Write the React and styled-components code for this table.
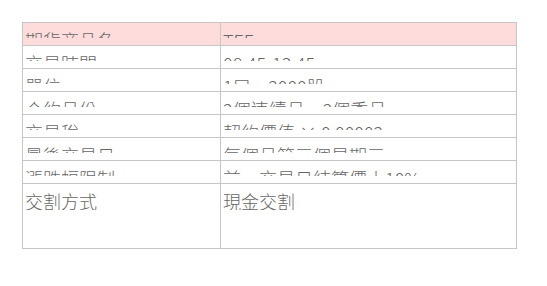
import React from 'react'
import styled, { createGlobalStyle } from 'styled-components'

const GlobalStyle = createGlobalStyle`
  body {
    margin: 0;
    background: #ffffff;
    font-family: 'Noto Sans CJK TC', 'Noto Sans', sans-serif;
  }
`

const rows = [
  { label: '期貨商品名', value: 'TEF', head: true },
  { label: '交易時間', value: '08:45-13:45' },
  { label: '單位', value: '1口 = 2000股' },
  { label: '合約月份', value: '2個連續月，2個季月' },
  { label: '交易稅', value: '契約價值 × 0.00002' },
  { label: '最後交易日', value: '每個月第三個星期三' },
  { label: '漲跌幅限制', value: '前一交易日結算價±10%' },
  { label: '交割方式', value: '現金交割', open: true },
]

const Page = styled.div`
  padding: 22px 30px 0 22px;
`

const Table = styled.table`
  width: 495px;
  border-collapse: collapse;
  table-layout: fixed;
`

const Row = styled.tr`
  background: ${(p) => (p.$head ? '#fedcdc' : '#ffffff')};
`

const Cell = styled.td`
  width: ${(p) => p.$w || 'auto'};
  height: ${(p) => (p.$open ? '64px' : '22px')};
  padding: 0 0 0 2px;
  border: 1px solid #c6c6c6;
  vertical-align: top;
  color: #666666;
  font-size: 18px;
  font-weight: 300;
  line-height: 18px;
`

const Clip = styled.div`
  height: ${(p) => (p.$open ? 'auto' : '15px')};
  overflow: hidden;
  white-space: nowrap;
`

const Text = styled.div`
  padding-top: 8px;
`

export default function App() {
  return (
    <Page>
      <GlobalStyle />
      <Table>
        <tbody>
          {rows.map((r) => (
            <Row key={r.label} $head={r.head}>
              <Cell $w="195px" $open={r.open}>
                <Clip $open={r.open}>
                  <Text>{r.label}</Text>
                </Clip>
              </Cell>
              <Cell $open={r.open}>
                <Clip $open={r.open}>
                  <Text>{r.value}</Text>
                </Clip>
              </Cell>
            </Row>
          ))}
        </tbody>
      </Table>
    </Page>
  )
}
